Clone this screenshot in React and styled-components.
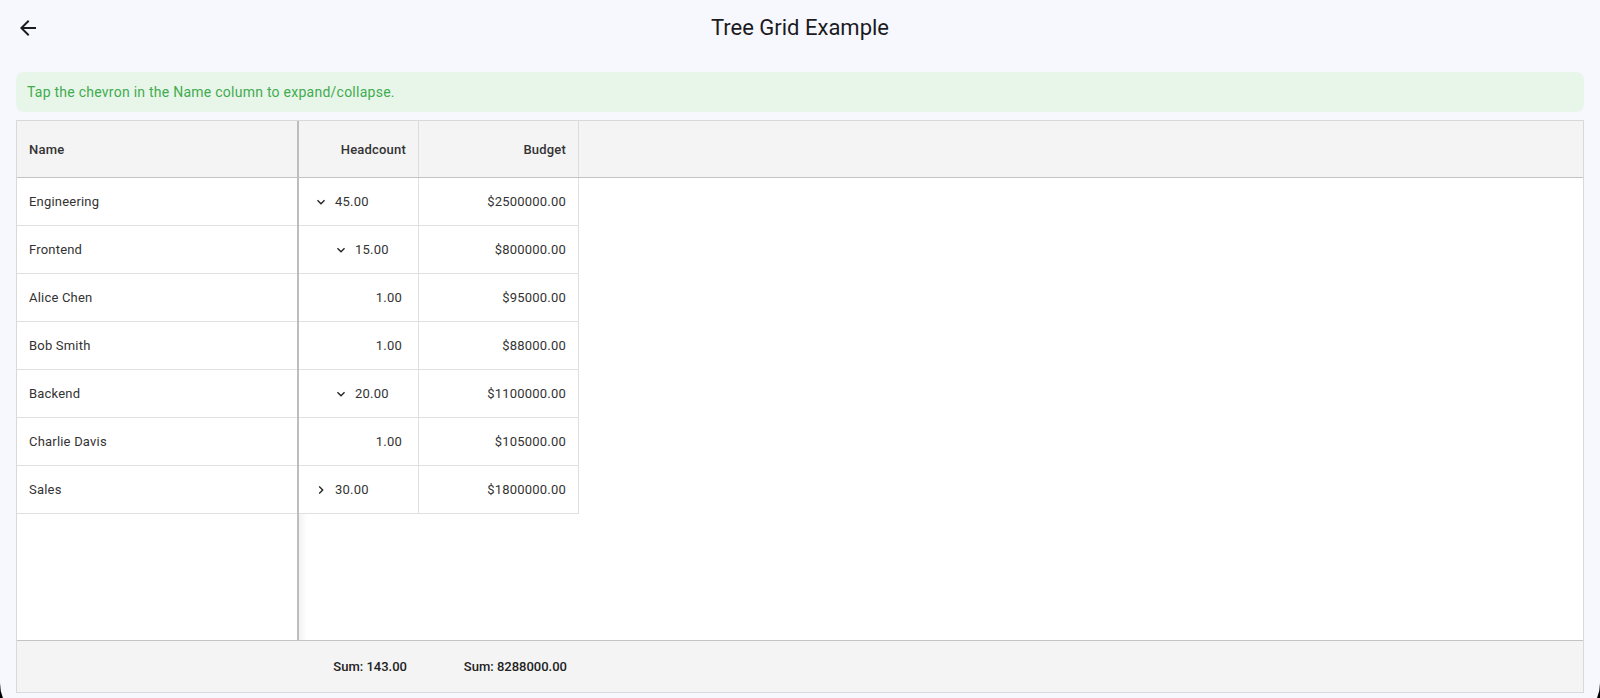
import React from 'react';
import styled, { createGlobalStyle } from 'styled-components';

const GlobalStyle = createGlobalStyle`
  html,
  body {
    margin: 0;
    padding: 0;
    background: #000;
    overflow: hidden;
  }

  body {
    font-family: Roboto, 'Noto Sans', Arial, sans-serif;
    -webkit-font-smoothing: antialiased;
  }
`;

const Shell = styled.div`
  height: 722px;
  display: flex;
  flex-direction: column;
  background: #f7f8fd;
  border-radius: 0 0 39px 39px;
  overflow: hidden;
`;

const AppBar = styled.header`
  height: 56px;
  flex-shrink: 0;
  display: grid;
  grid-template-columns: 56px 1fr 56px;
  align-items: center;
`;

const BackButton = styled.button`
  width: 24px;
  height: 24px;
  margin-left: 16px;
  padding: 0;
  border: none;
  background: transparent;
  color: #1b1b1f;
  display: flex;
  align-items: center;
  justify-content: center;
  cursor: pointer;
`;

const Title = styled.h1`
  margin: 0;
  text-align: center;
  font-size: 22px;
  font-weight: 400;
  color: #1b1b1f;
  line-height: 28px;
`;

const Content = styled.main`
  flex: 1;
  min-height: 0;
  display: flex;
  flex-direction: column;
  gap: 8px;
  padding: 16px 16px 29px;
`;

const Banner = styled.div`
  flex-shrink: 0;
  padding: 12px 11px;
  border-radius: 8px;
  background: #e8f5e9;
  color: #40ac4f;
  font-size: 14px;
  line-height: 16px;
  letter-spacing: 0.25px;
`;

const Grid = styled.div`
  flex: 1;
  min-height: 0;
  display: flex;
  flex-direction: column;
  border: 1px solid #d9d9d9;
  background: #fff;
  color: #333;
  font-size: 13px;
  letter-spacing: 0.2px;
`;

const GridBody = styled.div`
  flex: 1;
  min-height: 0;
  display: flex;
`;

const PinnedColumn = styled.div`
  width: ${(p) => p.$width}px;
  flex-shrink: 0;
  display: flex;
  flex-direction: column;
  box-sizing: border-box;
  border-right: 2px solid #bdbdbd;
`;

const ScrollArea = styled.div`
  flex: 1;
  min-width: 0;
  display: flex;
  flex-direction: column;
`;

const HeaderRow = styled.div`
  height: 56px;
  flex-shrink: 0;
  display: flex;
  background: #f4f4f4;
  border-bottom: 1px solid #c4c4c4;
`;

const HeaderCell = styled.div`
  width: ${(p) => (p.$width ? `${p.$width}px` : 'auto')};
  flex: ${(p) => (p.$width ? '0 0 auto' : '1')};
  box-sizing: border-box;
  display: flex;
  align-items: center;
  justify-content: ${(p) => (p.$align === 'right' ? 'flex-end' : 'flex-start')};
  padding: 0 12px;
  font-weight: 500;
  color: #333;
  border-right: ${(p) => (p.$divider ? '1px solid #dcdcdc' : 'none')};
`;

const Row = styled.div`
  height: 48px;
  display: flex;
  box-sizing: border-box;
  border-bottom: 1px solid #e0e0e0;
  width: ${(p) => (p.$width ? `${p.$width}px` : 'auto')};
`;

const Cell = styled.div`
  width: ${(p) => (p.$width ? `${p.$width}px` : '100%')};
  flex-shrink: 0;
  box-sizing: border-box;
  display: flex;
  align-items: center;
  justify-content: ${(p) => (p.$align === 'right' ? 'flex-end' : 'flex-start')};
  padding-left: ${(p) => 12 + (p.$indent || 0)}px;
  padding-right: ${(p) => p.$padRight || 12}px;
  border-right: ${(p) => (p.$divider ? '1px solid #e0e0e0' : 'none')};
`;

const Toggle = styled.span`
  width: 20px;
  height: 20px;
  margin-right: 4px;
  display: inline-flex;
  align-items: center;
  justify-content: center;
  color: #222;
  cursor: pointer;
`;

const EmptySpace = styled.div`
  flex: 1;
  background: ${(p) =>
    p.$shaded
      ? 'linear-gradient(to right, rgba(0, 0, 0, 0.05), rgba(0, 0, 0, 0) 8px)'
      : 'transparent'};
`;

const Footer = styled.div`
  height: 51px;
  flex-shrink: 0;
  display: flex;
  background: #f4f4f4;
  border-top: 1px solid #c4c4c4;
  font-weight: 500;
  color: #222;
  letter-spacing: 0;
`;

const FooterCell = styled.div`
  width: ${(p) => p.$width}px;
  flex-shrink: 0;
  box-sizing: border-box;
  display: flex;
  align-items: center;
  justify-content: flex-end;
  padding-right: 12px;
`;

const ArrowBack = () => (
  <svg width="24" height="24" viewBox="0 0 24 24" fill="currentColor">
    <path d="M20 11H7.83l5.59-5.59L12 4l-8 8 8 8 1.41-1.41L7.83 13H20v-2z" />
  </svg>
);

const Chevron = ({ open }) => (
  <svg width="16" height="16" viewBox="0 0 24 24" fill="currentColor">
    {open ? (
      <path d="M16.59 8.59L12 13.17 7.41 8.59 6 10l6 6 6-6z" />
    ) : (
      <path d="M10 6L8.59 7.41 13.17 12l-4.58 4.59L10 18l6-6z" />
    )}
  </svg>
);

const COLS = { name: 282, headcount: 120, budget: 160 };

const rows = [
  { name: 'Engineering', level: 0, group: true, open: true, headcount: '45.00', budget: '$2500000.00' },
  { name: 'Frontend', level: 1, group: true, open: true, headcount: '15.00', budget: '$800000.00' },
  { name: 'Alice Chen', level: 2, headcount: '1.00', budget: '$95000.00' },
  { name: 'Bob Smith', level: 2, headcount: '1.00', budget: '$88000.00' },
  { name: 'Backend', level: 1, group: true, open: true, headcount: '20.00', budget: '$1100000.00' },
  { name: 'Charlie Davis', level: 2, headcount: '1.00', budget: '$105000.00' },
  { name: 'Sales', level: 0, group: true, open: false, headcount: '30.00', budget: '$1800000.00' },
];

const HeadcountCell = ({ row }) =>
  row.group ? (
    <Cell $width={COLS.headcount} $indent={row.level * 20} $divider>
      <Toggle>
        <Chevron open={row.open} />
      </Toggle>
      {row.headcount}
    </Cell>
  ) : (
    <Cell $width={COLS.headcount} $align="right" $padRight={16} $divider>
      {row.headcount}
    </Cell>
  );

export default function App() {
  const scrollWidth = COLS.headcount + COLS.budget;

  return (
    <>
      <GlobalStyle />
      <Shell>
        <AppBar>
          <BackButton aria-label="Back">
            <ArrowBack />
          </BackButton>
          <Title>Tree Grid Example</Title>
          <span />
        </AppBar>

        <Content>
          <Banner>Tap the chevron in the Name column to expand/collapse.</Banner>

          <Grid>
            <GridBody>
              <PinnedColumn $width={COLS.name}>
                <HeaderRow>
                  <HeaderCell>Name</HeaderCell>
                </HeaderRow>
                {rows.map((row) => (
                  <Row key={row.name}>
                    <Cell>{row.name}</Cell>
                  </Row>
                ))}
                <EmptySpace />
              </PinnedColumn>

              <ScrollArea>
                <HeaderRow>
                  <HeaderCell $width={COLS.headcount} $align="right" $divider>
                    Headcount
                  </HeaderCell>
                  <HeaderCell $width={COLS.budget} $align="right" $divider>
                    Budget
                  </HeaderCell>
                  <HeaderCell />
                </HeaderRow>
                {rows.map((row) => (
                  <Row key={row.name} $width={scrollWidth}>
                    <HeadcountCell row={row} />
                    <Cell $width={COLS.budget} $align="right" $divider>
                      {row.budget}
                    </Cell>
                  </Row>
                ))}
                <EmptySpace $shaded />
              </ScrollArea>
            </GridBody>

            <Footer>
              <FooterCell $width={COLS.name} />
              <FooterCell $width={COLS.headcount}>Sum: 143.00</FooterCell>
              <FooterCell $width={COLS.budget}>Sum: 8288000.00</FooterCell>
            </Footer>
          </Grid>
        </Content>
      </Shell>
    </>
  );
}
